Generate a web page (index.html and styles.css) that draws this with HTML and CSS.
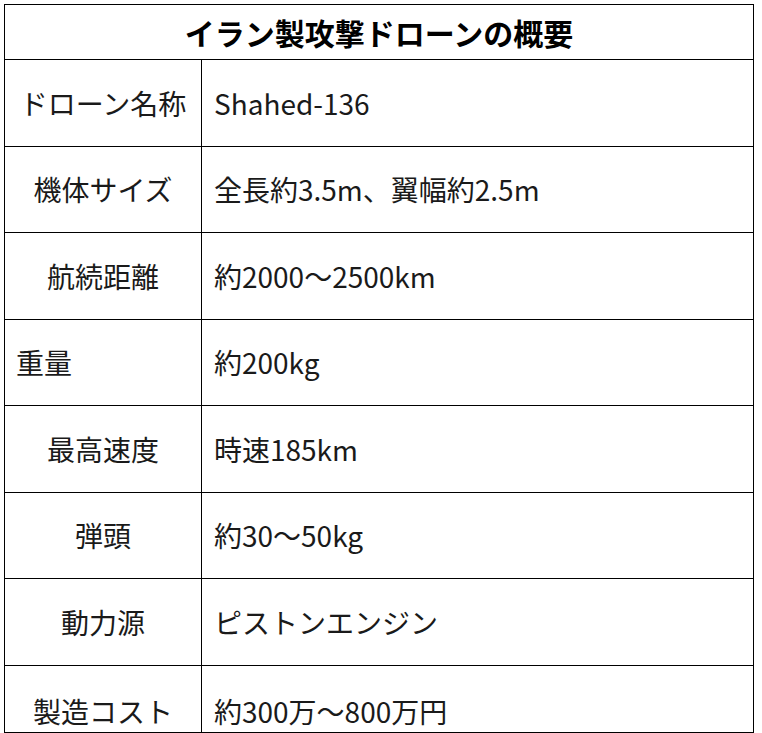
FILE: index.html
```html
<!DOCTYPE html>
<html lang="ja">
<head>
<meta charset="utf-8">
<title>イラン製攻撃ドローンの概要</title>
<link rel="stylesheet" href="styles.css">
</head>
<body>
<table class="spec">
  <colgroup>
    <col class="col-label">
    <col class="col-value">
  </colgroup>
  <thead>
    <tr class="head-row"><th colspan="2">イラン製攻撃ドローンの概要</th></tr>
  </thead>
  <tbody>
    <tr><td class="label">ドローン名称</td><td class="value">Shahed-136</td></tr>
    <tr><td class="label">機体サイズ</td><td class="value">全長約3.5m、翼幅約2.5m</td></tr>
    <tr><td class="label">航続距離</td><td class="value">約2000～2500km</td></tr>
    <tr><td class="label label-left">重量</td><td class="value">約200kg</td></tr>
    <tr><td class="label">最高速度</td><td class="value">時速185km</td></tr>
    <tr><td class="label">弾頭</td><td class="value">約30～50kg</td></tr>
    <tr><td class="label">動力源</td><td class="value">ピストンエンジン</td></tr>
    <tr class="last-row"><td class="label">製造コスト</td><td class="value">約300万～800万円</td></tr>
  </tbody>
</table>
</body>
</html>
```

FILE: styles.css
```css
html, body {
  margin: 0;
  padding: 0;
  background: #ffffff;
}

body {
  padding: 4px 0 0 4px;
  font-family: "Noto Sans CJK JP", "Noto Sans", sans-serif;
  color: #1a1a1a;
}

.spec {
  border-collapse: collapse;
  width: 749px;
  table-layout: fixed;
}

.col-label { width: 197px; }
.col-value { width: 552px; }

.spec th,
.spec td {
  border: 1px solid #000;
  padding: 0;
}

.head-row th {
  height: 54px;
  font-size: 30px;
  font-weight: 700;
  color: #000;
  text-align: center;
  vertical-align: middle;
  line-height: 36px;
}

.spec tbody tr {
  height: 86.5px;
}

.spec td {
  font-size: 28px;
  line-height: 40px;
  vertical-align: middle;
}

.label {
  text-align: center;
}

.label-left {
  text-align: left;
  padding-left: 11px !important;
}

.value {
  text-align: left;
  padding-left: 12px !important;
}

.spec tbody tr.last-row {
  height: 67px;
}

.last-row td {
  vertical-align: bottom;
  padding-bottom: 1px;
}
```
